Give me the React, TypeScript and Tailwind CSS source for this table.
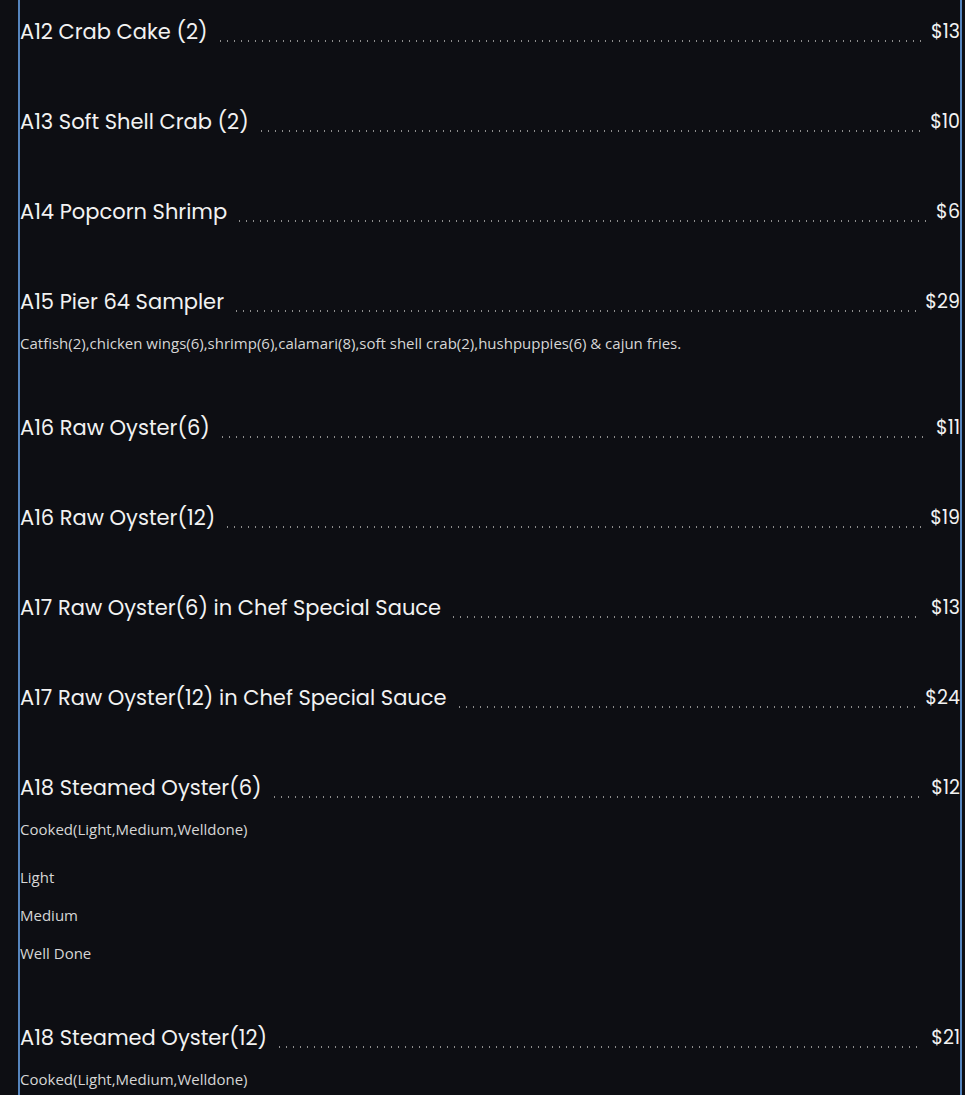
type Item = {
  name: string;
  price: string;
  desc?: string;
  options?: string[];
};

const ITEMS: Item[] = [
  { name: "A12 Crab Cake (2)", price: "$13" },
  { name: "A13 Soft Shell Crab (2)", price: "$10" },
  { name: "A14 Popcorn Shrimp", price: "$6" },
  {
    name: "A15 Pier 64 Sampler",
    price: "$29",
    desc: "Catfish(2),chicken wings(6),shrimp(6),calamari(8),soft shell crab(2),hushpuppies(6) & cajun fries.",
  },
  { name: "A16 Raw Oyster(6)", price: "$11" },
  { name: "A16 Raw Oyster(12)", price: "$19" },
  { name: "A17 Raw Oyster(6) in Chef Special Sauce", price: "$13" },
  { name: "A17 Raw Oyster(12) in Chef Special Sauce", price: "$24" },
  {
    name: "A18 Steamed Oyster(6)",
    price: "$12",
    desc: "Cooked(Light,Medium,Welldone)",
    options: ["Light", "Medium", "Well Done"],
  },
  {
    name: "A18 Steamed Oyster(12)",
    price: "$21",
    desc: "Cooked(Light,Medium,Welldone)",
    options: ["Light", "Medium", "Well Done"],
  },
];

function MenuRow({ item }: { item: Item }) {
  return (
    <div className="flex flex-col">
      <div className="flex items-end h-[30px]">
        <span className="text-[21px] leading-[30px] text-[#f2f2f2] whitespace-nowrap font-['Poppins','Noto_Sans',sans-serif]">
          {item.name}
        </span>
        <div className="flex-1 mx-[9px] mb-[5px] h-[2px] bg-[radial-gradient(circle,#8d8d8d_0.8px,transparent_1px)] bg-[length:7px_2px] bg-repeat-x" />
        <span className="text-[19px] leading-[30px] text-[#f2f2f2] font-['Poppins','Noto_Sans',sans-serif]">
          {item.price}
        </span>
      </div>
      {item.desc && (
        <p className="mt-[16px] text-[15px] leading-[20px] text-[#d6d6d6] font-['Open_Sans',sans-serif]">
          {item.desc}
        </p>
      )}
      {item.options && (
        <div className="flex flex-col gap-[18px] mt-[28px]">
          {item.options.map((o) => (
            <span
              key={o}
              className="text-[15px] leading-[20px] text-[#d6d6d6] font-['Open_Sans',sans-serif]"
            >
              {o}
            </span>
          ))}
        </div>
      )}
    </div>
  );
}

export default function App() {
  return (
    <div className="min-h-screen bg-[#0d0e13] overflow-hidden">
      <div className="ml-[18px] w-[944px] border-x-2 border-[#5584bd] pt-[17px] pb-[80px] flex flex-col gap-[60px]">
        {ITEMS.map((it) => (
          <MenuRow key={it.name} item={it} />
        ))}
      </div>
    </div>
  );
}
